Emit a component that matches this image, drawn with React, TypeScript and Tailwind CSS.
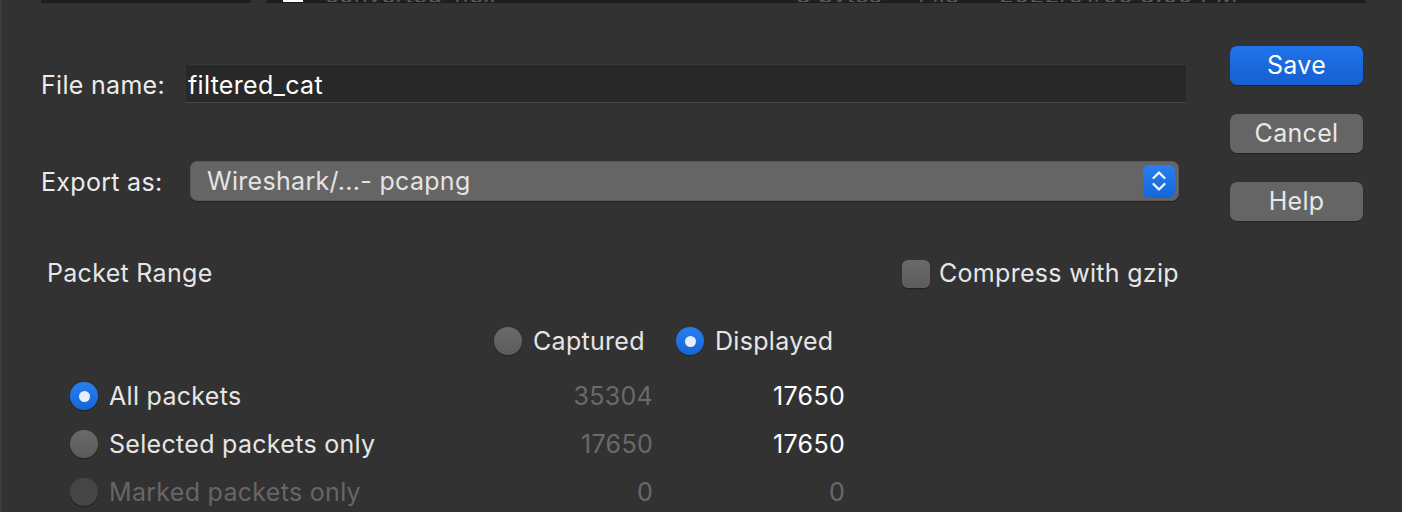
import React from 'react';

const font = { fontFamily: 'Inter, "Noto Sans", sans-serif' };

const Radio: React.FC<{ checked?: boolean; disabled?: boolean }> = ({ checked, disabled }) => {
  if (checked) {
    return (
      <span className="flex h-[28px] w-[28px] shrink-0 items-center justify-center rounded-full bg-gradient-to-b from-[#2a7ff0] to-[#1366d6] shadow-[0_1px_1px_rgba(0,0,0,0.35)]">
        <span className="h-[11px] w-[11px] rounded-full bg-[#e6efff]" />
      </span>
    );
  }
  return (
    <span
      className={`h-[28px] w-[28px] shrink-0 rounded-full shadow-[0_1px_1px_rgba(0,0,0,0.35)] ${
        disabled ? 'bg-[#464646]' : 'bg-gradient-to-b from-[#6a6a6a] to-[#5c5c5c]'
      }`}
    />
  );
};

const Button: React.FC<{ primary?: boolean; children: React.ReactNode }> = ({ primary, children }) => (
  <div
    className={`flex h-[39px] w-[133px] items-center justify-center rounded-[7px] text-[25px] tracking-[0.3px] shadow-[0_1px_1px_rgba(0,0,0,0.3)] ${
      primary ? 'bg-gradient-to-b from-[#1e74ea] to-[#175fd0] text-white' : 'bg-[#656565] text-[#e8e8e8]'
    }`}
  >
    {children}
  </div>
);

const Row: React.FC<{
  label: string;
  captured: string;
  displayed: string;
  checked?: boolean;
  disabled?: boolean;
}> = ({ label, captured, displayed, checked, disabled }) => (
  <div className="flex h-[48px] items-center pl-[68px]">
    <div className="flex w-[401px] items-center gap-[11px]">
      <Radio checked={checked} disabled={disabled} />
      <span className={`pt-[2px] ${disabled ? 'text-[#666666]' : 'text-[#e6e6e6]'}`}>{label}</span>
    </div>
    <div className="w-[182px] pt-[2px] text-right text-[#6a6a6a]">{captured}</div>
    <div className={`w-[192px] pt-[2px] text-right ${disabled ? 'text-[#6a6a6a]' : 'text-white'}`}>{displayed}</div>
  </div>
);

export default function App() {
  return (
    <div
      className="relative h-[512px] w-[1402px] overflow-hidden border-l-2 border-[#3b3b3b] bg-[#323232] text-[25px] tracking-[0.3px]"
      style={font}
    >
      {/* file list remnant */}
      <div className="flex h-[4px]">
        <div className="ml-[39px] h-[3px] w-[210px] border-b border-[#1a1a1a] bg-[#1f1f1f]" />
        <div className="ml-[15px] flex h-[3px] w-[1100px] overflow-hidden border-b border-[#1a1a1a] bg-[#1f1f1f] text-[24px] leading-[24px] text-[#5a5a5a]">
          <div className="-mt-[17px] flex">
            <span className="ml-[17px] mt-[10px] h-[10px] w-[20px] bg-white" />
            <span className="ml-[22px]">converted_flex</span>
            <span className="ml-[300px]">3 bytes</span>
            <span className="ml-[36px]">File</span>
            <span className="ml-[40px]">2022/01/05 3:09 PM</span>
          </div>
        </div>
      </div>

      <div className="flex">
        {/* form */}
        <div className="flex w-[1186px] flex-col pl-[39px]">
          <div className="mt-[62px] flex h-[37px] items-center">
            <span className="w-[145px] pt-[3px] text-[#ececec]">File name:</span>
            <div className="flex h-[37px] w-[1000px] items-center border-t border-b border-t-[#1f1f1f] border-b-[#4a4a4a] bg-[#282828] pl-[2px] pt-[3px] text-white">
              filtered_cat
            </div>
          </div>

          <div className="mt-[58px] flex h-[40px] items-center">
            <span className="w-[149px] pt-[3px] text-[#ececec]">Export as:</span>
            <div className="flex h-[40px] w-[989px] items-center justify-between rounded-[7px] border border-[#5a5a5a] bg-[#656565] pl-[16px] pr-[3px] text-[#e4e4e4] shadow-[0_1px_1px_rgba(0,0,0,0.3)]">
              <span className="pt-[2px]">Wireshark/...- pcapng</span>
              <span className="flex h-[33px] w-[32px] items-center justify-center rounded-[6px] bg-gradient-to-b from-[#2a7ff0] to-[#1666d8]">
                <svg width="16" height="24" viewBox="0 0 16 24" fill="none" stroke="#eef4ff" strokeWidth="2.4" strokeLinecap="round" strokeLinejoin="round">
                  <path d="M2.5 9 8 3.5 13.5 9" />
                  <path d="M2.5 15 8 20.5 13.5 15" />
                </svg>
              </span>
            </div>
          </div>
        </div>

        {/* buttons */}
        <div className="ml-[42px] mt-[42px] flex flex-col gap-[29px]">
          <Button primary>Save</Button>
          <Button>Cancel</Button>
          <Button>Help</Button>
        </div>
      </div>

      <div className="absolute left-0 top-[256px] w-full">
        <div className="flex h-[36px] items-center text-[#e6e6e6]">
          <span className="ml-[45px] w-[855px]">Packet Range</span>
          <span className="h-[28px] w-[28px] rounded-[6px] bg-gradient-to-b from-[#6a6a6a] to-[#5c5c5c] shadow-[0_1px_1px_rgba(0,0,0,0.35)]" />
          <span className="ml-[9px]">Compress with gzip</span>
        </div>

        <div className="mt-[31px] flex h-[36px] items-center pl-[492px] text-[#e6e6e6]">
          <Radio />
          <span className="ml-[11px] w-[143px] pt-[2px]">Captured</span>
          <Radio checked />
          <span className="ml-[11px] pt-[2px]">Displayed</span>
        </div>

        <div className="mt-[13px] flex flex-col">
          <Row label="All packets" captured="35304" displayed="17650" checked />
          <Row label="Selected packets only" captured="17650" displayed="17650" />
          <Row label="Marked packets only" captured="0" displayed="0" disabled />
        </div>
      </div>
    </div>
  );
}
